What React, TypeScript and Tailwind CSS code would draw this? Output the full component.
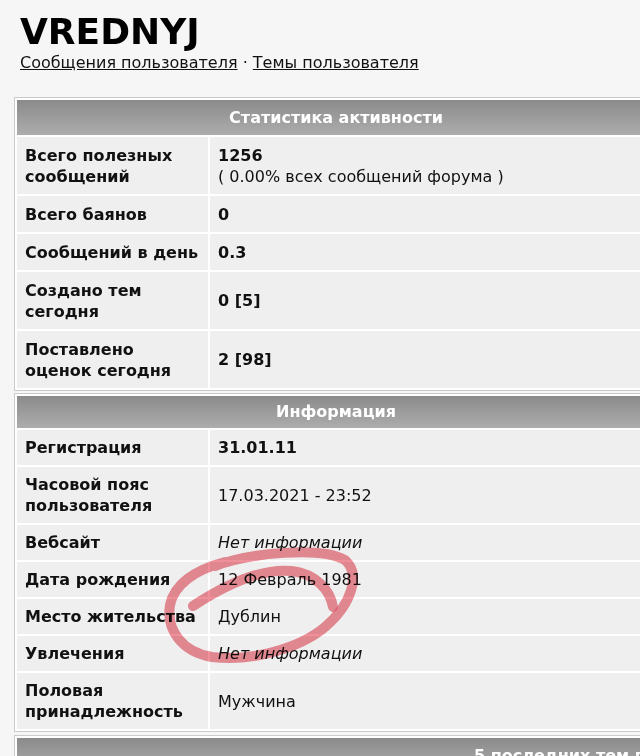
import React from "react";

type Row = {
  label: string;
  value: React.ReactNode;
};

const stats: Row[] = [
  {
    label: "Всего полезных сообщений",
    value: (
      <>
        <b>1256</b>
        <br />( 0.00% всех сообщений форума )
      </>
    ),
  },
  { label: "Всего баянов", value: <b>0</b> },
  { label: "Сообщений в день", value: <b>0.3</b> },
  { label: "Создано тем сегодня", value: <b>0 [5]</b> },
  { label: "Поставлено оценок сегодня", value: <b>2 [98]</b> },
];

const info: Row[] = [
  { label: "Регистрация", value: <b>31.01.11</b> },
  { label: "Часовой пояс пользователя", value: "17.03.2021 - 23:52" },
  { label: "Вебсайт", value: <i>Нет информации</i> },
  { label: "Дата рождения", value: "12 Февраль 1981" },
  { label: "Место жительства", value: "Дублин" },
  { label: "Увлечения", value: <i>Нет информации</i> },
  { label: "Половая принадлежность", value: "Мужчина" },
];

function Header({ title, tight }: { title: string; tight?: boolean }) {
  return (
    <tr>
      <th
        colSpan={2}
        className={
          (tight ? "h-[32px] " : "h-[35px] ") +
          "bg-linear-to-b from-[#8b8b8b] to-[#adadad] text-center font-bold text-white"
        }
      >
        {title}
      </th>
    </tr>
  );
}

function InfoTable({ title, rows, tight }: { title: string; rows: Row[]; tight?: boolean }) {
  const pad = tight ? "py-[7px]" : "py-[7.5px]";
  return (
    <table className="ml-[14px] w-[644px] border-separate border-spacing-[2px] border border-[#cbcbcb] bg-white">
      <tbody>
        <Header title={title} tight={tight} />
        {rows.map((row) => (
          <tr key={row.label}>
            <td className={`w-[191px] bg-[#efefef] px-2 ${pad} text-left align-middle font-bold leading-[21px]`}>
              {row.label}
            </td>
            <td className={`bg-[#efefef] px-2 ${pad} text-left align-middle leading-[21px]`}>
              {row.value}
            </td>
          </tr>
        ))}
      </tbody>
    </table>
  );
}

export default function App() {
  return (
    <div className="relative h-[756px] w-[640px] overflow-hidden bg-[#f6f6f6] font-['DejaVu_Sans',sans-serif] text-[16px] text-[#111]">
      <div className="px-5 pt-3">
        <h1 className="text-[36px] font-bold leading-[40px] text-black">VREDNYJ</h1>
        <div className="leading-[21px]">
          <a className="underline">Сообщения пользователя</a> ·{" "}
          <a className="underline">Темы пользователя</a>
        </div>
      </div>

      <div className="mt-6">
        <InfoTable title="Статистика активности" rows={stats} />
      </div>
      <div className="mt-[2px]">
        <InfoTable title="Информация" rows={info} tight />
      </div>
      <div className="mt-[3px]">
        <table className="ml-[14px] w-[1208px] border-separate border-spacing-[2px] border border-[#cbcbcb] bg-white">
          <tbody>
            <Header title="5 последних тем пользователя" />
          </tbody>
        </table>
      </div>

      {/* red marker circle drawn over the screenshot */}
      <svg
        className="pointer-events-none absolute left-0 top-0 mix-blend-multiply"
        width="640"
        height="756"
        viewBox="0 0 640 756"
      >
        <g
          fill="none"
          stroke="#e85a68"
          strokeOpacity="0.68"
          strokeWidth="10"
          strokeLinecap="round"
          strokeLinejoin="round"
        >
          <path d="M193 606 C225 585 262 568 292 571 C316 574 330 590 333 607" />
          <path d="M215 566 C250 553 320 546 345 560 C361 574 352 604 325 627 C300 648 252 662 212 657 C182 652 166 630 170 605 C174 585 194 570 225 562" />
        </g>
      </svg>
    </div>
  );
}
